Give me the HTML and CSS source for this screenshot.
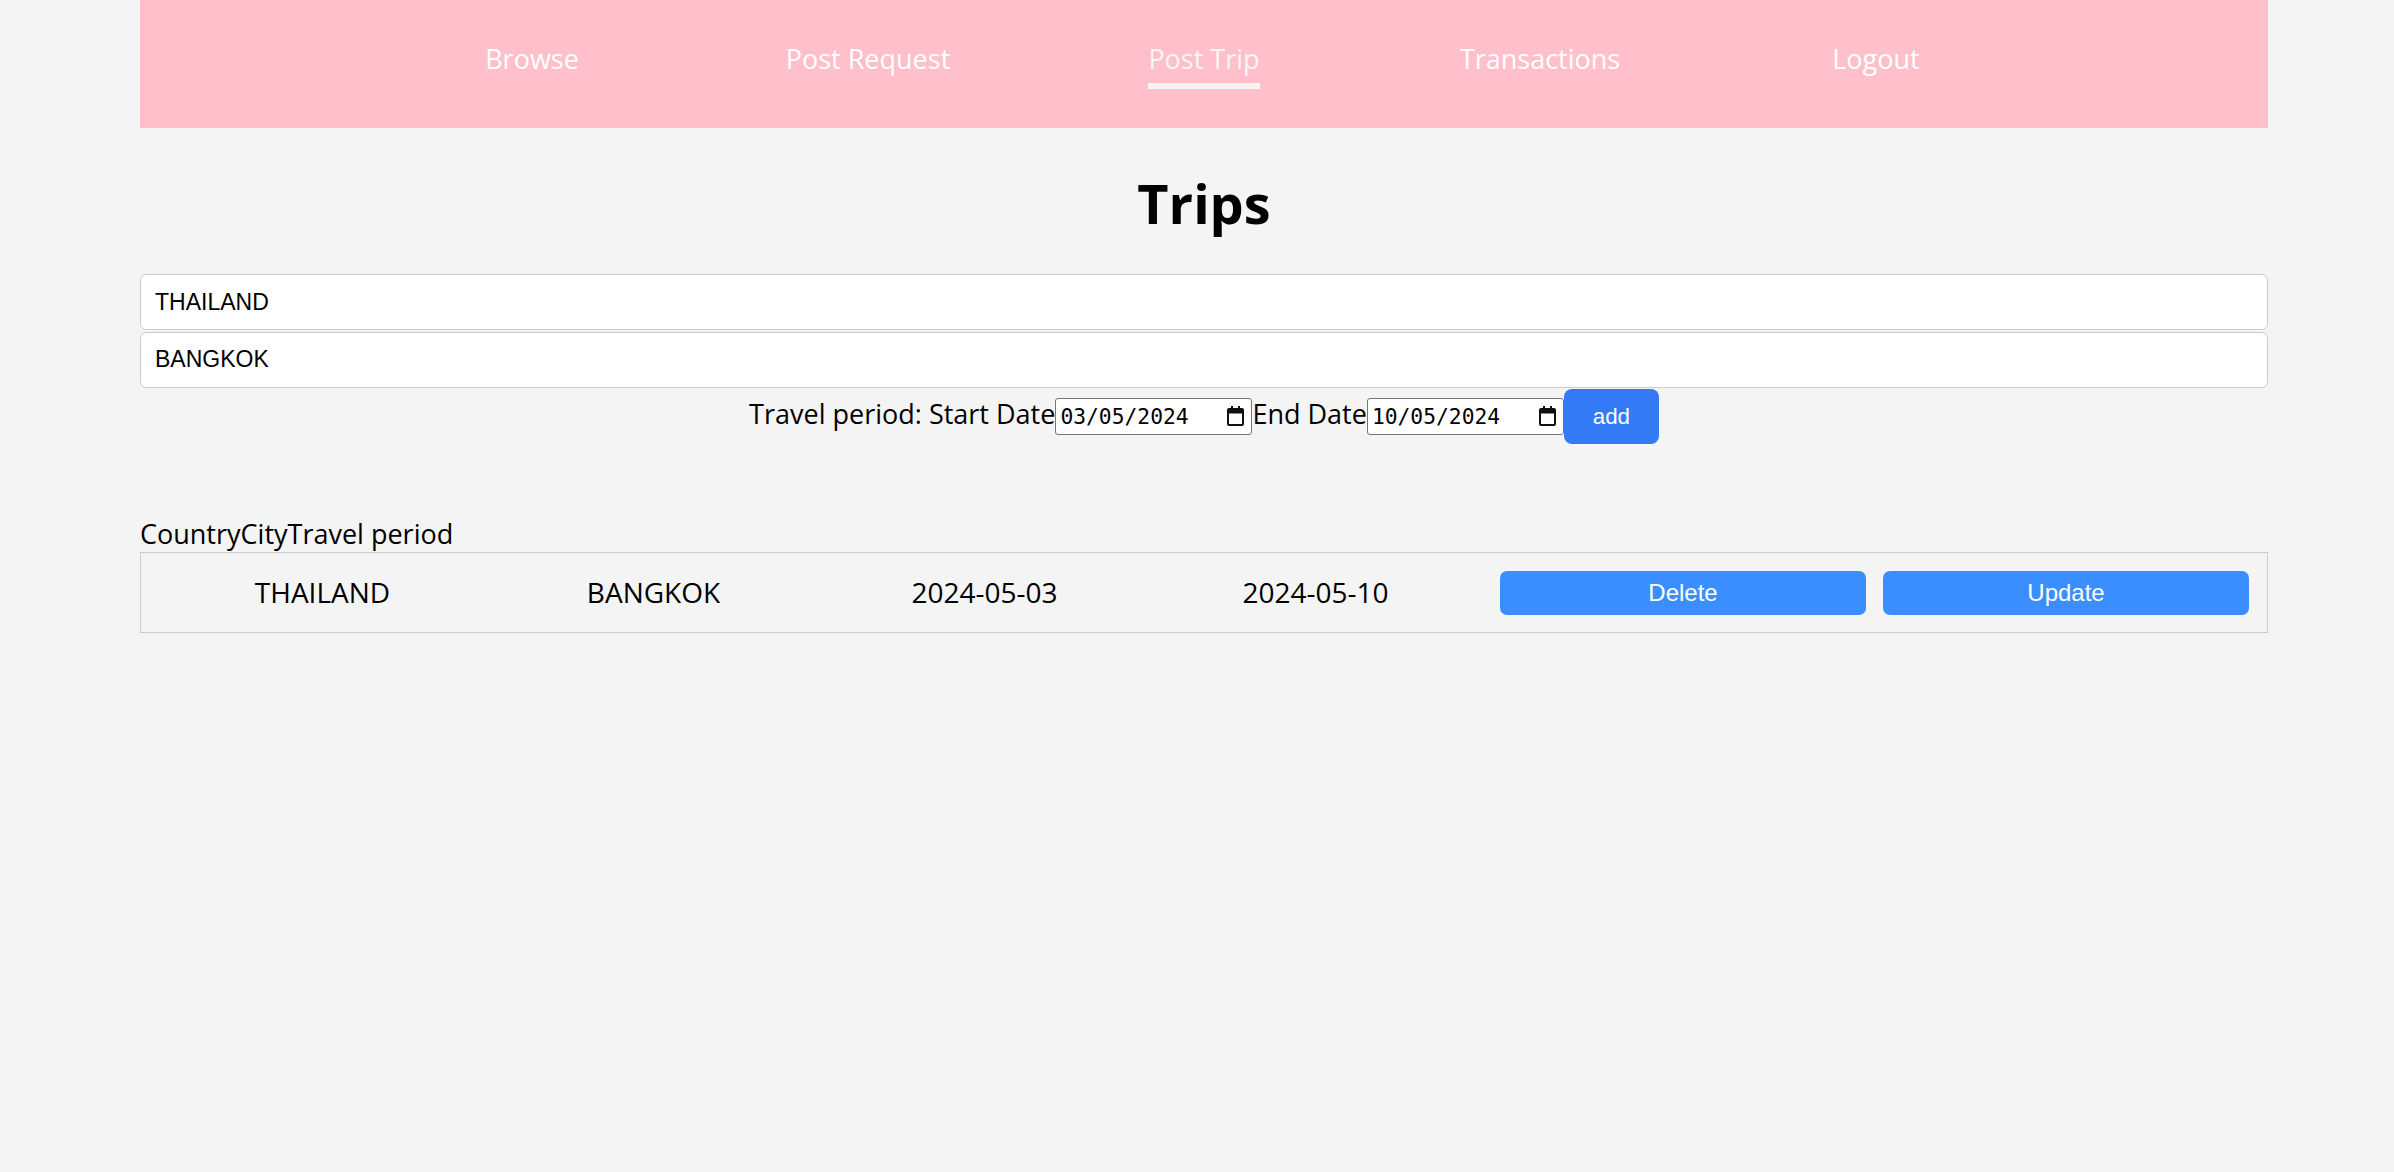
FILE: index.html
```html
<!DOCTYPE html>
<html lang="en">
<head>
<meta charset="utf-8">
<title>Trips</title>
<link rel="stylesheet" href="styles.css">
</head>
<body>
<div class="page">
  <nav class="nav">
    <div class="nav-item"><a class="nav-link" href="#">Browse</a></div>
    <div class="nav-item"><a class="nav-link" href="#">Post Request</a></div>
    <div class="nav-item"><a class="nav-link active" href="#">Post Trip</a></div>
    <div class="nav-item"><a class="nav-link" href="#">Transactions</a></div>
    <div class="nav-item"><a class="nav-link" href="#">Logout</a></div>
  </nav>

  <h1 class="title">Trips</h1>

  <form class="trip-form">
    <input class="text-input" type="text" value="THAILAND">
    <input class="text-input" type="text" value="BANGKOK">
    <div class="date-row">
      <span class="label">Travel period: Start Date</span><span class="date-field"><span class="date-text">03/05/2024</span><svg class="cal-icon" width="17" height="20" viewBox="0 0 17 20"><path fill-rule="evenodd" d="M4 0h2v2h5V0h2v2h2a2 2 0 0 1 2 2v14a2 2 0 0 1-2 2H2a2 2 0 0 1-2-2V4a2 2 0 0 1 2-2h2z M2 7.5v10.5h13V7.5z"/></svg></span><span class="label">End Date</span><span class="date-field"><span class="date-text">10/05/2024</span><svg class="cal-icon" width="17" height="20" viewBox="0 0 17 20"><path fill-rule="evenodd" d="M4 0h2v2h5V0h2v2h2a2 2 0 0 1 2 2v14a2 2 0 0 1-2 2H2a2 2 0 0 1-2-2V4a2 2 0 0 1 2-2h2z M2 7.5v10.5h13V7.5z"/></svg></span><button class="add-btn" type="button">add</button>
    </div>
  </form>

  <div class="table-head"><span>Country</span><span>City</span><span>Travel period</span></div>
  <div class="trip-row">
    <div class="cell">THAILAND</div>
    <div class="cell">BANGKOK</div>
    <div class="cell">2024-05-03</div>
    <div class="cell">2024-05-10</div>
    <div class="actions">
      <button class="action-btn" type="button">Delete</button>
      <button class="action-btn" type="button">Update</button>
    </div>
  </div>
</div>
</body>
</html>
```

FILE: styles.css
```css
html, body {
  margin: 0;
  padding: 0;
  background: #f4f4f4;
}

body {
  font-family: "Open Sans", "Noto Sans", sans-serif;
  font-size: 27px;
  color: #000;
}

.page {
  width: 2128px;
  margin-left: 140px;
}

/* Navigation */
.nav {
  height: 128px;
  background: #ffc0cb;
  display: flex;
  justify-content: center;
}

.nav-item {
  width: 336px;
  display: flex;
  justify-content: center;
  align-items: flex-start;
  padding-top: 40px;
  box-sizing: border-box;
}

.nav-link {
  color: #ffffff;
  text-decoration: none;
  font-size: 27px;
  line-height: 37px;
  padding-bottom: 6px;
  border-bottom: 6px solid transparent;
}

.nav-link.active {
  color: #f6f6f6;
  border-bottom-color: #f4f4f4;
}

/* Title */
.title {
  margin: 38px 0 34px;
  text-align: center;
  font-size: 54px;
  font-weight: 700;
  line-height: 74px;
}

/* Form */
.trip-form {
  margin: 0;
}

.text-input {
  display: block;
  width: 100%;
  height: 56px;
  box-sizing: border-box;
  margin: 0 0 1.6px;
  padding: 0 14px;
  border: 1px solid #cccccc;
  border-radius: 6px;
  background: #ffffff;
  font-family: "Liberation Sans", Arial, sans-serif;
  font-size: 23px;
  color: #000;
  outline: none;
}

.date-row {
  display: flex;
  justify-content: center;
  align-items: baseline;
}

.label {
  font-size: 27px;
  line-height: 37px;
}

.date-field {
  display: inline-flex;
  align-items: center;
  justify-content: space-between;
  width: 197px;
  height: 37px;
  box-sizing: border-box;
  padding: 0 7px 0 4px;
  border: 1px solid #767676;
  border-radius: 3px;
  background: #ffffff;
}

.date-text {
  font-family: "DejaVu Sans Mono", monospace;
  font-size: 21.3px;
  line-height: 25px;
  color: #000;
}

.cal-icon {
  display: block;
  fill: #111111;
}

.add-btn {
  width: 95px;
  height: 55px;
  border: none;
  border-radius: 8px;
  background: #3479f6;
  color: #ffffff;
  font-family: "Liberation Sans", Arial, sans-serif;
  font-size: 22.4px;
  padding: 0;
}

/* Table */
.table-head {
  margin-top: 71px;
  line-height: 37px;
  font-size: 27px;
}

.trip-row {
  display: flex;
  align-items: center;
  height: 81px;
  box-sizing: border-box;
  border: 1px solid #cccccc;
  padding-left: 16px;
}

.cell {
  width: 331px;
  text-align: center;
  font-size: 28px;
  line-height: 37px;
}

.actions {
  display: flex;
  gap: 17px;
  margin-left: 19px;
}

.action-btn {
  width: 366px;
  height: 44px;
  border: none;
  border-radius: 7px;
  background: #3b8eff;
  color: #ffffff;
  font-family: "Liberation Sans", Arial, sans-serif;
  font-size: 24px;
  padding: 0;
}
```
